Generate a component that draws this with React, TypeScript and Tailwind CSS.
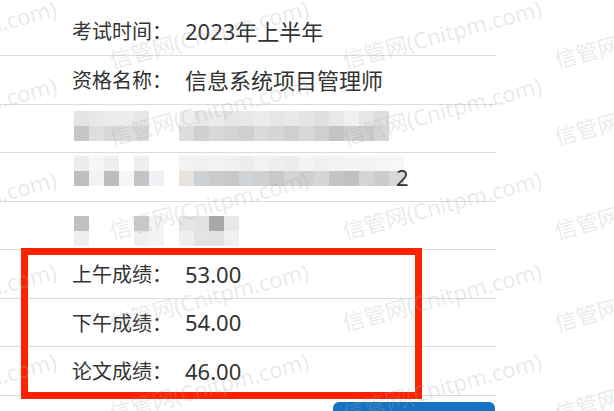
const FONT = { fontFamily: '"Noto Sans", "Noto Sans CJK SC", sans-serif' }

// mosaic colours, two lines of 15px tiles each
const mosaic3 = [
  ['bg-[#e4e4e4]', 'bg-[#e8e8e8]', 'bg-[#ebebeb]', 'bg-[#ececec]', 'bg-[#e6e6e6]', 'bg-transparent', 'bg-transparent', 'bg-[#efefef]', 'bg-[#e7e7e7]', 'bg-[#ebebeb]', 'bg-[#e5e5e5]', 'bg-[#e9e9e9]', 'bg-[#ececec]', 'bg-[#e6e6e6]', 'bg-[#e9e9e9]', 'bg-[#e4e4e4]', 'bg-[#e0e0e0]', 'bg-[#e8e8e8]', 'bg-[#f0f0f0]', 'bg-[#e6e6e6]', 'bg-[#dedede]'],
  ['bg-[#c6c6c9]', 'bg-[#dedede]', 'bg-[#d8d8d8]', 'bg-[#dcdcdc]', 'bg-[#d9d9d9]', 'bg-transparent', 'bg-transparent', 'bg-[#dddddd]', 'bg-[#d0d0d0]', 'bg-[#d8d8d8]', 'bg-[#d4d4d4]', 'bg-[#cfcfd1]', 'bg-[#dadada]', 'bg-[#d6d6d6]', 'bg-[#cfcfcf]', 'bg-[#d8d8d8]', 'bg-[#cfcfcf]', 'bg-[#c4c4c4]', 'bg-[#d0d0d0]', 'bg-[#cccccc]', 'bg-[#d6d6d6]'],
]

const mosaic4 = [
  ['bg-[#ececec]', 'bg-[#f6f6f6]', 'bg-[#eeeeee]', 'bg-transparent', 'bg-[#efeded]', 'bg-transparent', 'bg-transparent', 'bg-[#f4f2f0]', 'bg-[#f0f0f0]', 'bg-[#f2f2f2]', 'bg-[#f0f0f0]', 'bg-[#ececec]', 'bg-[#f2f2f2]', 'bg-[#eeeeee]', 'bg-[#ececec]', 'bg-[#f4f4f4]', 'bg-[#f0f0f0]', 'bg-[#f2f2f2]', 'bg-[#f4f4f4]', 'bg-[#f3f3f3]', 'bg-[#f5f5f5]', 'bg-[#f7f7f7]'],
  ['bg-[#bebebe]', 'bg-[#f3f3f3]', 'bg-[#bdbdbd]', 'bg-[#f6f6f6]', 'bg-[#c4c2c2]', 'bg-[#eef2f4]', 'bg-transparent', 'bg-[#e6e2de]', 'bg-[#cfd2d4]', 'bg-[#cacaca]', 'bg-[#c8c8c8]', 'bg-[#d0d4d6]', 'bg-[#d0d0d0]', 'bg-[#c8c8c8]', 'bg-[#d4d4d4]', 'bg-[#cdd0d2]', 'bg-[#d6d6d6]', 'bg-[#c4c4c4]', 'bg-[#c0c0c0]', 'bg-[#d4d4d4]', 'bg-[#cccccc]', 'bg-[#d8d8d8]'],
]

const mosaic5 = [
  ['bg-[#c0c0c0]', 'bg-transparent', 'bg-transparent', 'bg-transparent', 'bg-[#cccccc]', 'bg-[#f4f4f4]', 'bg-transparent', 'bg-[#e4e4e4]', 'bg-[#e2e2e2]', 'bg-[#a9a9a9]', 'bg-[#e8e8e8]'],
  ['bg-[#efefef]', 'bg-transparent', 'bg-transparent', 'bg-transparent', 'bg-[#efefef]', 'bg-[#f4f4f4]', 'bg-transparent', 'bg-[#efefef]', 'bg-[#e3e3e3]', 'bg-[#e2e2e2]', 'bg-[#f0f0f0]'],
]

function Mosaic({ tiles }: { tiles: string[][] }) {
  return (
    <div className="flex flex-col">
      {tiles.map((line, i) => (
        <div key={i} className="flex">
          {line.map((c, j) => (
            <div key={j} className={`w-[15px] h-[15px] ${c}`} />
          ))}
        </div>
      ))}
    </div>
  )
}

function InfoRow({ label, value, h }: { label: string; value: string; h: string }) {
  return (
    <div className={`flex items-center border-b border-[#dcdcdc] pl-[72px] ${h}`}>
      <span className="w-[113px] pt-[2px] text-[20px] text-[#333]">{label}</span>
      <span className="text-[22px] text-[#333]">{value}</span>
    </div>
  )
}

// watermark: left-centre anchor of each "信管网(Cnitpm.com)"
const marks: [number, number][] = []
for (const x of [-142, 110, 343, 555]) {
  for (const y of [-30, 60, 137, 231, 323, 413]) marks.push([x, y])
}

export default function App() {
  return (
    <div className="relative w-[614px] h-[411px] overflow-hidden bg-white" style={FONT}>
      <div className="w-[496px] pt-[7px]">
        <InfoRow label="考试时间：" value="2023年上半年" h="h-[49px]" />
        <InfoRow label="资格名称：" value="信息系统项目管理师" h="h-[49px]" />
        <div className="flex items-center border-b border-[#dcdcdc] pl-[74px] h-[48px]">
          <div className="mb-[5px]">
            <Mosaic tiles={mosaic3} />
          </div>
        </div>
        <div className="flex items-center border-b border-[#dcdcdc] pl-[74px] h-[49px]">
          <div className="mb-[12px]">
            <Mosaic tiles={mosaic4} />
          </div>
          <span className="text-[22px] text-[#333] -ml-[8px]">2</span>
        </div>
        <div className="flex items-center border-b border-[#dcdcdc] pl-[74px] h-[48px]">
          <div className="mt-[11px]">
            <Mosaic tiles={mosaic5} />
          </div>
        </div>
        <InfoRow label="上午成绩：" value="53.00" h="h-[49px]" />
        <InfoRow label="下午成绩：" value="54.00" h="h-[48px]" />
        <InfoRow label="论文成绩：" value="46.00" h="h-[49px]" />
        <div className="mt-[6px] ml-[333px] w-[162px] h-[20px] rounded-t-[6px] bg-[#1472c4]" />
      </div>

      {/* red annotation box */}
      <div className="absolute left-[21px] top-[248px] w-[401px] h-[151px] border-[7px] border-[#ff2200]" />

      {/* watermark layer */}
      <div className="pointer-events-none absolute inset-0">
        {marks.map(([x, y], i) => (
          <span
            key={i}
            className="absolute origin-left -rotate-[15deg] whitespace-nowrap text-[22px] leading-[22px] text-[rgba(170,170,170,0.25)]"
            style={{ left: x, top: y - 11 }}
          >
            信管网(Cnitpm.com)
          </span>
        ))}
      </div>
    </div>
  )
}
